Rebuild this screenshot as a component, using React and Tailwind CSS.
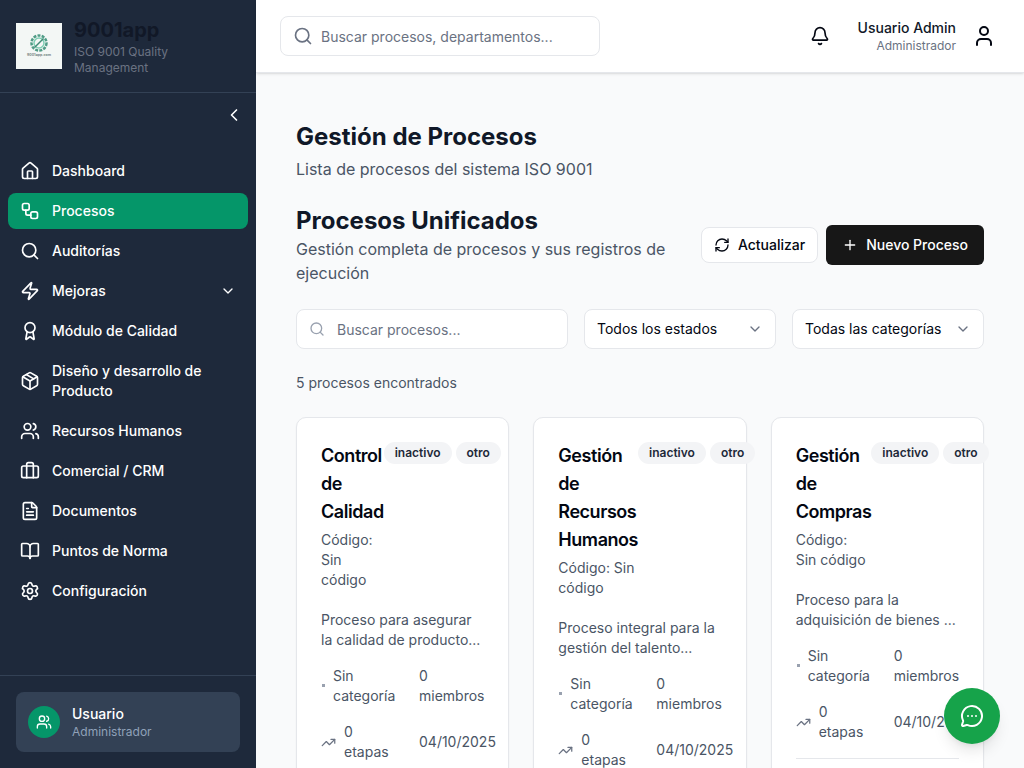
import React from 'react'
import {
  Award, Bell, BookOpen, Briefcase, ChevronDown, ChevronLeft, FileText, House,
  MessageCircleMore, Package, Plus, RefreshCw, Search, Settings, TrendingUp,
  User, Users, Workflow, Zap,
} from 'lucide-react'

const navItems = [
  { label: 'Dashboard', icon: House },
  { label: 'Procesos', icon: Workflow, active: true },
  { label: 'Auditorías', icon: Search },
  { label: 'Mejoras', icon: Zap, hasChildren: true },
  { label: 'Módulo de Calidad', icon: Award },
  { label: 'Diseño y desarrollo de Producto', icon: Package },
  { label: 'Recursos Humanos', icon: Users },
  { label: 'Comercial / CRM', icon: Briefcase },
  { label: 'Documentos', icon: FileText },
  { label: 'Puntos de Norma', icon: BookOpen },
  { label: 'Configuración', icon: Settings },
]

const processes = [
  { title: 'Control de Calidad', desc: 'Proceso para asegurar la calidad de producto...' },
  { title: 'Gestión de Recursos Humanos', desc: 'Proceso integral para la gestión del talento...' },
  { title: 'Gestión de Compras', desc: 'Proceso para la adquisición de bienes ...' },
]

const Logo = () => (
  <svg width="46" height="46" viewBox="0 0 46 46" className="shrink-0">
    <rect width="46" height="46" fill="#f3f7f5" />
    <circle cx="23" cy="20" r="7.5" fill="none" stroke="#4f9c86" strokeWidth="2.5" strokeDasharray="3 1.2" />
    <circle cx="23" cy="20" r="5" fill="none" stroke="#7fcfb4" strokeWidth="1.5" />
    <path d="M18.5 24.5 L27.5 15.5" stroke="#3f8a75" strokeWidth="1.5" />
    <text x="23" y="33" textAnchor="middle" fontSize="3.6" fontWeight="700" fill="#7a8886">9001app.com</text>
  </svg>
)

const Sidebar = () => (
  <aside className="w-64 shrink-0 h-full flex flex-col bg-[#1e293b]">
    <div className="flex items-center gap-3 p-4 border-b border-[#334155]">
      <Logo />
      <div className="min-w-0">
        <div className="text-xl leading-7 font-bold text-[#111827]">9001app</div>
        <div className="text-xs text-gray-500">ISO 9001 Quality Management</div>
      </div>
    </div>

    <div className="flex justify-end pr-3 pt-3 pb-3">
      <ChevronLeft size={20} className="text-white" />
    </div>

    <nav className="flex-1 px-2 py-4 flex flex-col gap-1">
      {navItems.map((item) => {
        const Icon = item.icon
        return (
          <div
            key={item.label}
            className={`flex items-center gap-3 px-3 py-2 rounded-lg text-sm font-medium text-white ${item.active ? 'bg-[#059669]' : ''}`}
          >
            <Icon size={20} className="shrink-0" />
            <span className="flex-1">{item.label}</span>
            {item.hasChildren && <ChevronDown size={16} />}
          </div>
        )
      })}
    </nav>

    <div className="p-4 border-t border-[#334155]">
      <div className="flex items-center gap-3 p-3 rounded-lg bg-[#334155]">
        <div className="w-8 h-8 rounded-full bg-[#059669] flex items-center justify-center">
          <Users size={16} className="text-white" />
        </div>
        <div>
          <div className="text-sm font-medium text-white">Usuario</div>
          <div className="text-xs text-slate-400">Administrador</div>
        </div>
      </div>
    </div>
  </aside>
)

const Header = () => (
  <header className="h-[73px] shrink-0 flex items-center justify-between pl-6 pr-7 bg-white border-b border-gray-200 shadow-sm">
    <div className="w-80 h-10 flex items-center gap-2 px-3 bg-white border border-gray-200 rounded-lg">
      <Search size={20} className="text-gray-500" />
      <span className="pt-px text-sm text-gray-500">Buscar procesos, departamentos...</span>
    </div>
    <div className="flex items-center">
      <Bell size={20} className="text-gray-950 mr-7" />
      <div className="text-right mr-4">
        <div className="text-sm font-medium text-gray-900">Usuario Admin</div>
        <div className="text-xs text-gray-500">Administrador</div>
      </div>
      <User size={24} className="text-gray-950" />
    </div>
  </header>
)

const Badge = ({ children }) => (
  <span className="h-[22px] px-2.5 flex items-center border border-transparent rounded-full bg-gray-100 text-xs font-semibold text-gray-800">
    {children}
  </span>
)

const ProcessCard = ({ title, desc }) => (
  <div className="bg-white border border-gray-200 rounded-[10px] shadow-xs p-6">
    <div className="flex items-start">
      <div className="shrink-0 w-min">
        <h3 className="text-lg leading-7 font-semibold tracking-tight text-gray-950">{title}</h3>
        <p className="mt-1 text-sm text-gray-600">Código: Sin código</p>
      </div>
      <div className="flex gap-1 shrink-0">
        <Badge>inactivo</Badge>
        <Badge>otro</Badge>
      </div>
    </div>

    <p className="mt-5 mb-4 text-sm text-gray-600 line-clamp-2">{desc}</p>

    <div className="grid grid-cols-[82px_65px] gap-x-4 gap-y-4 text-sm text-gray-600">
      <div className="flex items-center gap-2">
        <span className="w-[3px] h-[3px] ml-px -mt-px bg-gray-400 shrink-0"></span>
        <span className="w-min">Sin categoría</span>
      </div>
      <span className="w-min">0 miembros</span>
      <div className="flex items-center gap-2">
        <TrendingUp size={15} className="text-gray-500 shrink-0" />
        <span className="w-min">0 etapas</span>
      </div>
      <span className="self-center whitespace-nowrap">04/10/2025</span>
    </div>

    <div className="mt-4 border-t border-gray-200 h-10"></div>
  </div>
)

const App = () => {
  return (
    <div className="relative h-screen flex overflow-hidden font-['Inter',sans-serif] bg-[#f9fafb]">
      <Sidebar />

      <div className="flex-1 min-w-0 flex flex-col">
        <Header />

        <main className="flex-1 min-h-0 overflow-hidden px-10 pt-12">
          <h1 className="text-2xl font-bold text-gray-900">Gestión de Procesos</h1>
          <p className="mt-1 text-base text-gray-600">Lista de procesos del sistema ISO 9001</p>

          {/* Toolbar */}
          <div className="mt-6 flex items-center justify-between gap-6">
            <div>
              <h2 className="text-2xl font-bold text-gray-900">Procesos Unificados</h2>
              <p className="text-base text-gray-600">Gestión completa de procesos y sus registros de ejecución</p>
            </div>
            <div className="flex items-center gap-2 shrink-0">
              <button className="h-9 px-3 flex items-center gap-2 bg-white border border-gray-200 rounded-lg text-sm font-medium text-gray-950">
                <RefreshCw size={16} />
                Actualizar
              </button>
              <button className="h-10 px-4 flex items-center gap-2 bg-[#171717] rounded-md text-sm font-medium text-white">
                <Plus size={16} />
                Nuevo Proceso
              </button>
            </div>
          </div>

          {/* Filters */}
          <div className="mt-6 flex gap-4">
            <div className="flex-1 h-10 flex items-center gap-3 px-3 bg-white border border-gray-200 rounded-lg">
              <Search size={16} className="text-gray-400" />
              <span className="pt-px text-sm text-gray-500">Buscar procesos...</span>
            </div>
            <div className="w-48 h-10 flex items-center justify-between px-3 bg-white border border-gray-200 rounded-lg text-sm text-gray-950">
              Todos los estados
              <ChevronDown size={16} className="text-gray-500" />
            </div>
            <div className="w-48 h-10 flex items-center justify-between px-3 bg-white border border-gray-200 rounded-lg text-sm text-gray-950">
              Todas las categorías
              <ChevronDown size={16} className="text-gray-500" />
            </div>
          </div>

          <p className="mt-6 text-sm text-gray-600">5 procesos encontrados</p>

          {/* Cards */}
          <div className="mt-6 grid grid-cols-3 gap-6">
            {processes.map((process) => (
              <ProcessCard key={process.title} {...process} />
            ))}
          </div>
        </main>
      </div>

      {/* Chat button */}
      <button className="absolute right-6 bottom-6 w-14 h-14 rounded-full bg-[#16a34a] shadow-lg flex items-center justify-center text-white">
        <MessageCircleMore size={24} />
      </button>
    </div>
  )
}

export default App
